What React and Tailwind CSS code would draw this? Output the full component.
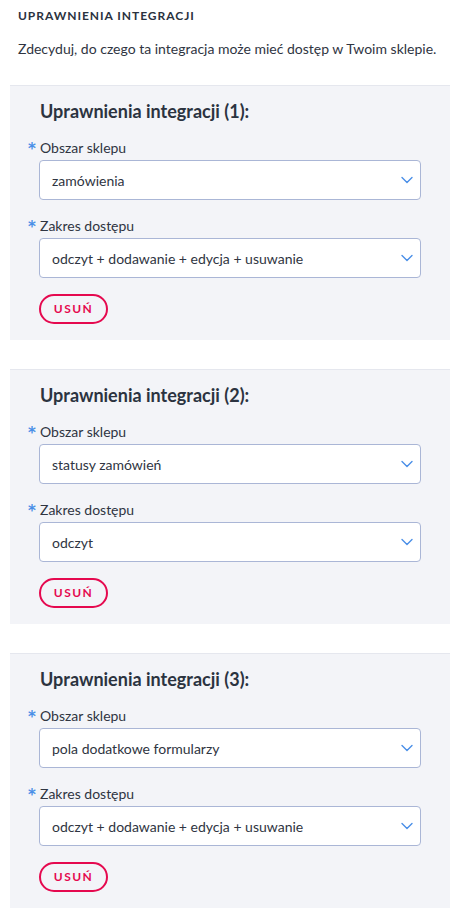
import React from "react";

const cards = [
  { n: 1, area: "zamówienia", scope: "odczyt + dodawanie + edycja + usuwanie" },
  { n: 2, area: "statusy zamówień", scope: "odczyt" },
  { n: 3, area: "pola dodatkowe formularzy", scope: "odczyt + dodawanie + edycja + usuwanie" },
];

function Chevron() {
  return (
    <svg width="12" height="8" viewBox="0 0 12 8" fill="none" className="shrink-0">
      <path d="M1 1.5L6 6.5L11 1.5" stroke="#4a8fe7" strokeWidth="1.4" strokeLinecap="round" strokeLinejoin="round" />
    </svg>
  );
}

function Field({ label, value }) {
  return (
    <div>
      <div className="relative h-5 flex items-center text-[14px] text-[#2f3542] whitespace-nowrap">
        <span className="absolute -left-[11px] top-[1px] text-[#4a8fe7] text-[15px] font-bold" style={{ fontFamily: '"DejaVu Sans", sans-serif' }}>*</span>
        <span className="pl-px">{label}</span>
      </div>
      <div className="mt-[3px] h-10 bg-white border border-[#aab6d6] rounded-[4px] flex items-center justify-between pl-3 pr-[7px] text-[14px] text-[#2f3542] whitespace-nowrap">
        <span>{value}</span>
        <Chevron />
      </div>
    </div>
  );
}

export default function App() {
  return (
    <div className="bg-white pl-[10px] pr-[7px] pb-[10px]" style={{ fontFamily: '"Source Sans Pro", Lato, sans-serif' }}>
      <div className="pl-2 pt-[8px] text-[12px] font-bold tracking-[0.08em] text-[#2a3240] leading-4 whitespace-nowrap">UPRAWNIENIA INTEGRACJI</div>
      <div className="pl-2 mt-[15px] text-[14px] text-[#2f3542] leading-5 whitespace-nowrap">Zdecyduj, do czego ta integracja może mieć dostęp w Twoim sklepie.</div>
      <div className="mt-[26px] flex flex-col gap-[29px]">
        {cards.map((c) => (
          <div key={c.n} className="bg-[#f3f4f8] border-t border-[#e5e7ee] px-[29px] pt-[13px] pb-[16px]">
            <div className="pl-px h-6 flex items-center text-[18px] font-bold text-[#2b3340] whitespace-nowrap">Uprawnienia integracji ({c.n}):</div>
            <div className="mt-[14px]">
              <Field label="Obszar sklepu" value={c.area} />
            </div>
            <div className="mt-[15px]">
              <Field label="Zakres dostępu" value={c.scope} />
            </div>
            <button className="mt-4 h-[30px] w-[69px] rounded-full border-2 border-[#e5094f] text-[#e5094f] text-[12px] font-bold tracking-[0.12em] flex items-center justify-center">
              USUŃ
            </button>
          </div>
        ))}
      </div>
    </div>
  );
}
